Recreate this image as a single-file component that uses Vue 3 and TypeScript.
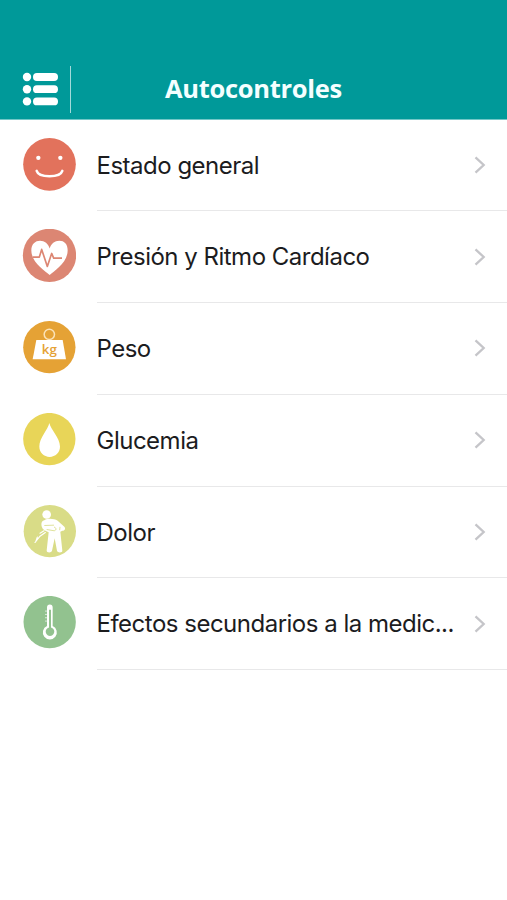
<script setup lang="ts">
type IconName = 'mood' | 'heart' | 'weight' | 'glucose' | 'pain' | 'thermometer'

interface ControlItem {
  icon: IconName
  label: string
  viewBox: string
}

const items: ControlItem[] = [
  { icon: 'mood', label: 'Estado general', viewBox: '36 37.5 162 162' },
  { icon: 'heart', label: 'Presión y Ritmo Cardíaco', viewBox: '36 42.75 162 162' },
  { icon: 'weight', label: 'Peso', viewBox: '36 39 162 162' },
  { icon: 'glucose', label: 'Glucemia', viewBox: '36 38.25 162 162' },
  { icon: 'pain', label: 'Dolor', viewBox: '36 43.5 162 162' },
  { icon: 'thermometer', label: 'Efectos secundarios a la medic...', viewBox: '36 42.75 162 162' },
]
</script>

<template>
  <div class="screen">
    <header class="header">
      <button class="menu" type="button" aria-label="Menú">
        <svg class="menu-icon" viewBox="0 0 36 34">
          <g fill="#fff">
            <circle cx="5" cy="5" r="4.2" />
            <circle cx="5" cy="17.2" r="4.2" />
            <circle cx="5" cy="29.4" r="4.2" />
            <rect x="11" y="1.1" width="25" height="7.8" rx="3.9" />
            <rect x="11" y="13.3" width="25" height="7.8" rx="3.9" />
            <rect x="11" y="25.5" width="25" height="7.8" rx="3.9" />
          </g>
        </svg>
      </button>
      <h1 class="title">Autocontroles</h1>
    </header>

    <ul class="list">
      <li v-for="item in items" :key="item.icon" class="row">
        <svg class="icon" :viewBox="item.viewBox">
          <g v-if="item.icon === 'mood'">
            <circle cx="118.5" cy="116.5" r="79" fill="#e2725c" />
            <circle cx="85" cy="97" r="6.5" fill="#fff" />
            <circle cx="151" cy="97" r="6.5" fill="#fff" />
            <path d="M80 136C83 146 98 152 118.500 152S154 146 157 136" fill="none" stroke="#fff" stroke-width="7.500" stroke-linecap="round" />
          </g>
          <g v-else-if="item.icon === 'heart'">
            <circle cx="118.5" cy="122" r="80" fill="#dc8673" />
            <path d="M119 181C106 169 64 144 64 107C64 88 76 78 90 78C104 78 115 87 119 101C123 87 134 78 148 78C163 78 173 88 173 107C173 144 132 169 119 181Z" fill="#fff" />
            <path d="M68 127H88L95 104L112 155L125 116L131 130H156" fill="none" stroke="#dc8673" stroke-width="5" stroke-linejoin="round" />
          </g>
          <g v-else-if="item.icon === 'weight'">
            <circle cx="118" cy="117.500" r="78.500" fill="#e5a235" />
            <circle cx="118" cy="79" r="15.500" fill="none" stroke="#fbe3b8" stroke-width="4.500" />
            <path d="M79 96H158L168 154H68Z" fill="#fff" />
            <text x="118" y="137" class="kg">kg</text>
          </g>
          <g v-else-if="item.icon === 'glucose'">
            <circle cx="118" cy="116.500" r="78.500" fill="#e8d558" />
            <path d="M118 68C122 88 150 112 150 139C150 158 136 170 119 170S88 158 88 139C88 112 114 88 118 68Z" fill="#fff" />
          </g>
          <g v-else-if="item.icon === 'pain'">
            <circle cx="119.500" cy="122" r="78.500" fill="#d9dc87" />
            <circle cx="110" cy="72" r="13" fill="#fff" />
            <path d="M103 89C113 83 132 84 143 91L163 109C168 116 164 121 157 121L151 124L157 181C158 187 143 188 141 181L134 143L126 181C124 188 109 187 110 180L116 125L103 119C95 114 92 101 96 94C98 91 100 90 103 89Z" fill="#fff" />
            <path d="M103 105L132 104M110 117L134 121L139 115L132 109M150 109L149 119" fill="none" stroke="#d9dc87" stroke-width="2.500" />
            <path d="M102 121L90 128M106 126L90 137L75 156M82 140L77 154" fill="none" stroke="#fff" stroke-width="3.500" stroke-linecap="round" />
          </g>
          <g v-else>
            <circle cx="119" cy="121" r="78.500" fill="#92c28f" />
            <path d="M111 133V77Q111 68 119.500 68T128 77V133A21 21 0 1 1 111 133Z" fill="#fff" />
            <path d="M117 84H123V137A13 13 0 1 1 117 137Z" fill="#92c28f" />
            <path d="M106 88H110M106 98H110M106 108H110M106 118H110" stroke="#fff" stroke-width="3" />
          </g>
        </svg>
        <div class="content">
          <span class="label">{{ item.label }}</span>
          <svg class="chevron" viewBox="0 0 12 20">
            <path d="M1.500 2.300L9.700 10L1.500 17.700" />
          </svg>
        </div>
      </li>
    </ul>
  </div>
</template>

<style>
body {
  background: #fff;
}
</style>

<style scoped>
.screen {
  width: 507px;
  height: 900px;
  overflow: hidden;
  background: #fff;
  font-family: Inter, "Liberation Sans", sans-serif;
}

.header {
  box-sizing: border-box;
  display: flex;
  height: 119.5px;
  padding-top: 66px;
  border-bottom: 1px solid #73c7c7;
  background: #009999;
  background-clip: padding-box;
}

.menu {
  display: flex;
  align-items: flex-start;
  box-sizing: border-box;
  width: 71px;
  height: 47px;
  padding: 6px 0 0 22px;
  border: 0;
  border-right: 1px solid #a3dada;
  background: none;
}

.menu-icon {
  display: block;
  flex: none;
  width: 36px;
  height: 34px;
}

.title {
  flex: 1;
  margin: 0;
  padding-right: 71px;
  color: #f4ffff;
  font: 700 25.5px/44px "Open Sans", sans-serif;
  letter-spacing: -0.3px;
  text-align: center;
}

.list {
  margin: 0;
  padding: 0;
  list-style: none;
}

.row {
  display: flex;
  height: 91.75px;
  padding-left: 22px;
}

.icon {
  flex: none;
  width: 54px;
  height: 54px;
  margin-top: 18px;
}

.kg {
  fill: #e5a235;
  font: 600 40px "Open Sans", sans-serif;
  text-anchor: middle;
}

.content {
  box-sizing: border-box;
  display: flex;
  flex: 1;
  align-items: center;
  justify-content: space-between;
  min-width: 0;
  margin-left: 20.5px;
  padding-right: 21.5px;
  border-bottom: 1px solid #e8e8e9;
}

.label {
  padding-top: 1.5px;
  color: #1c1c1e;
  font-size: 24px;
  line-height: 34px;
  letter-spacing: -0.5px;
  white-space: nowrap;
}

.chevron {
  width: 12px;
  height: 20px;
}

.chevron path {
  fill: none;
  stroke: #c5c5c9;
  stroke-width: 2.3;
}
</style>
